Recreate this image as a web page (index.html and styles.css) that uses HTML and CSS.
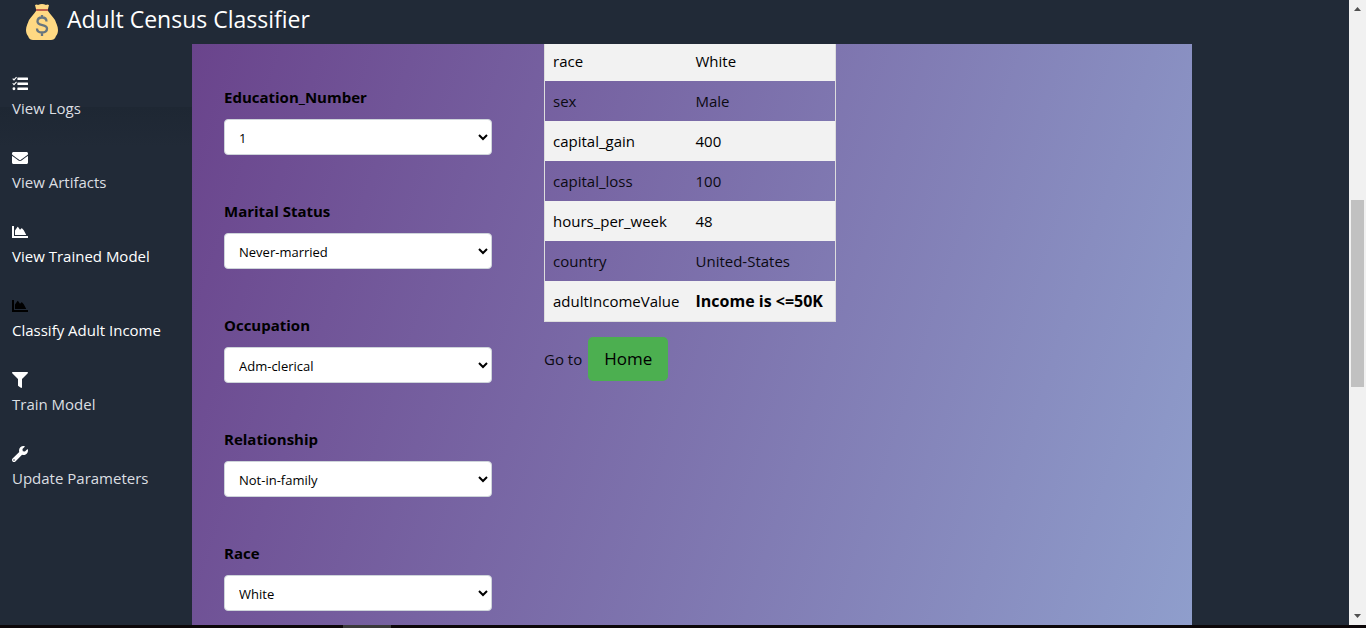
FILE: index.html
```html
<!DOCTYPE html>
<html lang="en">
<head>
<meta charset="utf-8">
<title>Adult Census Classifier</title>
<link rel="stylesheet" href="styles.css">
</head>
<body>
<svg class="defs" aria-hidden="true">
  <symbol id="area" viewBox="0 0 512 512"><path fill="currentColor" d="M500 384c6.600 0 12 5.400 12 12v40c0 6.600-5.400 12-12 12H12c-6.600 0-12-5.400-12-12V76c0-6.600 5.400-12 12-12h40c6.600 0 12 5.400 12 12v308h436zM456 352H96V208l78-112q10-12 20 0l62 84 50-42q12-8 20 2l50 60z"/></symbol>
</svg>
<div class="app">
  <div class="view">
    <header class="top">
      <svg class="bag" viewBox="0 0 32 36" aria-hidden="true">
        <path fill="#ffd983" d="M9 1q2-1 3 0 2-1 4-1t4 1q1-1 3 0l-1 4v2c2 3 5 6 7 9 1 3 3 6 3 10 0 3-1 5-2 6-1 3-3 4-5 4H7c-2 0-4-1-5-4-1-1-2-3-2-6 0-4 2-7 3-10 2-3 5-6 7-9V5z"/>
        <path fill="#bf5f4c" d="M10 5h12v2H10z"/>
        <path fill="none" stroke="#67757f" stroke-width="2.300" d="M20.500 17.500c0-2.500-2-4-4.500-4s-4.500 1.500-4.500 4c0 5 9.500 2.500 9.500 7 0 2.500-2 4-5 4s-5-1.500-5-4M16 11v3M16 28v4"/>
      </svg>
      <h1 class="brand">Adult Census Classifier</h1>
    </header>
    <nav class="side">
      <a class="item" href="#logs"><svg class="icon" viewBox="0 0 512 512"><path fill="currentColor" d="M10 92l24-22 30 26 70-70 24 24-94 100zM10 242l24-22 30 26 70-70 24 24-94 100zM62 360a46 46 0 1 1 0 92 46 46 0 0 1 0-92zM188 50h308q16 0 16 16v48q0 16-16 16H188q-16 0-16-16V66q0-16 16-16zM188 210h308q16 0 16 16v48q0 16-16 16H188q-16 0-16-16v-48q0-16 16-16zM188 366h308q16 0 16 16v48q0 16-16 16H188q-16 0-16-16v-48q0-16 16-16z"/></svg><span>View Logs</span></a>
      <a class="item" href="#artifacts"><svg class="icon" viewBox="0 0 512 512"><path fill="currentColor" d="M502.300 190.800c3.900-3.100 9.700-.2 9.700 4.700V400c0 26.500-21.500 48-48 48H48c-26.500 0-48-21.500-48-48V195.600c0-5 5.700-7.800 9.700-4.700 22.400 17.400 52.100 39.500 154.100 113.600 21.100 15.400 56.700 47.800 92.200 47.600 35.700.3 72-32.800 92.300-47.600 102-74.100 131.600-96.300 154-113.700zM256 320c23.200.4 56.600-29.200 73.400-41.400 132.700-96.300 142.800-104.700 173.400-128.700 5.800-4.500 9.200-11.500 9.200-18.900v-19c0-26.500-21.500-48-48-48H48c-26.500 0-48 21.500-48 48v19c0 7.400 3.400 14.300 9.200 18.900 30.600 23.900 40.700 32.400 173.400 128.700 16.800 12.200 50.200 41.800 73.400 41.400z"/></svg><span>View Artifacts</span></a>
      <a class="item bright" href="#model"><svg class="icon"><use href="#area"/></svg><span>View Trained Model</span></a>
      <a class="item bright active" href="#classify"><svg class="icon"><use href="#area"/></svg><span>Classify Adult Income</span></a>
      <a class="item" href="#train"><svg class="icon" viewBox="0 0 512 512"><path fill="currentColor" d="M488 0H24C2.700 0-8 25.900 7.100 41L192 225.900V432c0 7.800 3.800 15.200 10.200 19.700l80 56C298 518.700 320 507.500 320 488V225.900L504.900 41C520 25.900 509.300 0 488 0z"/></svg><span>Train Model</span></a>
      <a class="item" href="#params"><svg class="icon" viewBox="0 0 512 512"><path fill="currentColor" fill-rule="evenodd" d="M507.700 109.100c-2.200-9-13.500-12.100-20.100-5.500l-74.400 74.400-67.900-11.300L334 98.900l74.400-74.400c6.600-6.600 3.400-17.900-5.700-20.200-47.400-11.700-99.600.9-136.600 37.900-39.600 39.600-50.500 97.100-34.100 147.200L18.700 402.800c-25 25-25 65.500 0 90.500s65.500 25 90.500 0l213.200-213.200c50.100 16.700 107.500 5.700 147.400-34.200 37.100-37.100 49.700-89.300 37.900-136.800zM64 472a24 24 0 1 1 0-48 24 24 0 0 1 0 48z"/></svg><span>Update Parameters</span></a>
    </nav>
    <main class="panel">
      <form class="form">
        <div class="field"><label for="edu">Education_Number</label><select id="edu"><option>1</option></select></div>
        <div class="field"><label for="marital">Marital Status</label><select id="marital"><option>Never-married</option></select></div>
        <div class="field"><label for="occ">Occupation</label><select id="occ"><option>Adm-clerical</option></select></div>
        <div class="field"><label for="rel">Relationship</label><select id="rel"><option>Not-in-family</option></select></div>
        <div class="field"><label for="race">Race</label><select id="race"><option>White</option></select></div>
      </form>
      <section class="result">
        <table class="data">
          <tbody>
            <tr><td>race</td><td>White</td></tr>
            <tr><td>sex</td><td>Male</td></tr>
            <tr><td>capital_gain</td><td>400</td></tr>
            <tr><td>capital_loss</td><td>100</td></tr>
            <tr><td>hours_per_week</td><td>48</td></tr>
            <tr><td>country</td><td>United-States</td></tr>
            <tr><td>adultIncomeValue</td><td><b>Income is &lt;=50K</b></td></tr>
          </tbody>
        </table>
        <div class="goto"><span>Go to</span><button class="home" type="button">Home</button></div>
      </section>
    </main>
  </div>
  <div class="scroll" aria-hidden="true">
    <svg class="arrow" viewBox="0 0 17 17"><path fill="#505050" d="M5 11h7L8.500 7z"/></svg>
    <div class="track"><div class="thumb"></div></div>
    <svg class="arrow" viewBox="0 0 17 17"><path fill="#505050" d="M5 6h7l-3.500 4z"/></svg>
  </div>
  <div class="taskbar"><div class="task"></div></div>
</div>
</body>
</html>
```
FILE: styles.css
```css
* { box-sizing: border-box; }
body {
  margin: 0;
  background: #212a37;
  color: #0b0a12;
  font: 15px/24px "Open Sans", "Noto Sans", sans-serif;
}
.defs { display: none; }
.app {
  display: grid;
  grid-template-columns: 1fr 17px;
  grid-template-rows: 1fr 3px;
  min-height: 100vh;
}
.view {
  display: grid;
  grid-template-columns: 192px minmax(0, 1000px);
  grid-template-rows: 44px 1fr;
}
.top {
  grid-column: 1 / -1;
  display: flex;
  align-items: flex-start;
  gap: 9px;
  padding: 4px 26px 0;
}
.bag { width: 32px; height: 36px; }
.brand {
  margin: 0;
  color: #fff;
  font-size: 23px;
  font-weight: 400;
  line-height: 30px;
}
.side {
  display: flex;
  flex-direction: column;
  gap: 24px;
  padding: 28px 12px;
  background: linear-gradient(#1e2733, #212a37) 0 63px / 100% 40px no-repeat;
}
.item {
  display: flex;
  flex-direction: column;
  color: #dcdfe2;
  text-decoration: none;
  white-space: nowrap;
  height: 50px;
}
.icon {
  width: 16px;
  height: 16px;
  margin: 4px 0;
  flex: none;
  color: #fff;
}
.bright { color: #fff; }
.active .icon { color: #000; }
.panel {
  display: flex;
  align-items: flex-start;
  gap: 52px;
  padding: 0 32px;
  background: linear-gradient(108deg, #6a448c, #8f9ecc);
}
.form {
  width: 268px;
  display: flex;
  flex-direction: column;
  gap: 44px;
  padding: 41px 0 14px;
}
.field { display: flex; flex-direction: column; gap: 10px; }
.field label { color: #000; font-weight: 700; }
.field select {
  height: 36px;
  padding: 2px 10px 0;
  border: 1px solid #ced4da;
  border-radius: 4px;
  background: #fff;
  color: #000;
  font: 13px "Open Sans", "Noto Sans", sans-serif;
}
.data {
  width: 292px;
  border: 1px solid #ddd;
  border-top: 0;
  border-collapse: collapse;
  white-space: nowrap;
}
.data td { height: 40px; padding: 0 8px; }
.data tr:first-child td { height: 37px; padding-bottom: 4px; }
.data td:first-child { width: 143px; }
.data b { font-size: 16px; }
.data tr:nth-child(odd) { background: #f2f2f2; color: #000; }
.goto {
  display: flex;
  align-items: center;
  gap: 6px;
  margin-top: 15px;
}
.home {
  height: 44px;
  width: 80px;
  padding: 0;
  border: 0;
  border-radius: 5px;
  background: #4caf50;
  color: #000;
  font: 17px "Open Sans", "Noto Sans", sans-serif;
}
.scroll {
  display: flex;
  flex-direction: column;
  background: #f1f1f1;
}
.arrow { width: 17px; height: 17px; flex: none; }
.track {
  flex: 1;
  display: grid;
  grid-template-rows: 183fr 187fr 221fr;
  padding: 0 2px;
}
.thumb { grid-row: 2; background: #c1c1c1; }
.taskbar { grid-column: 1 / -1; background: #0c0709; padding-left: 343px; }
.task { width: 48px; height: 3px; background: #3a3a3a; }
```
